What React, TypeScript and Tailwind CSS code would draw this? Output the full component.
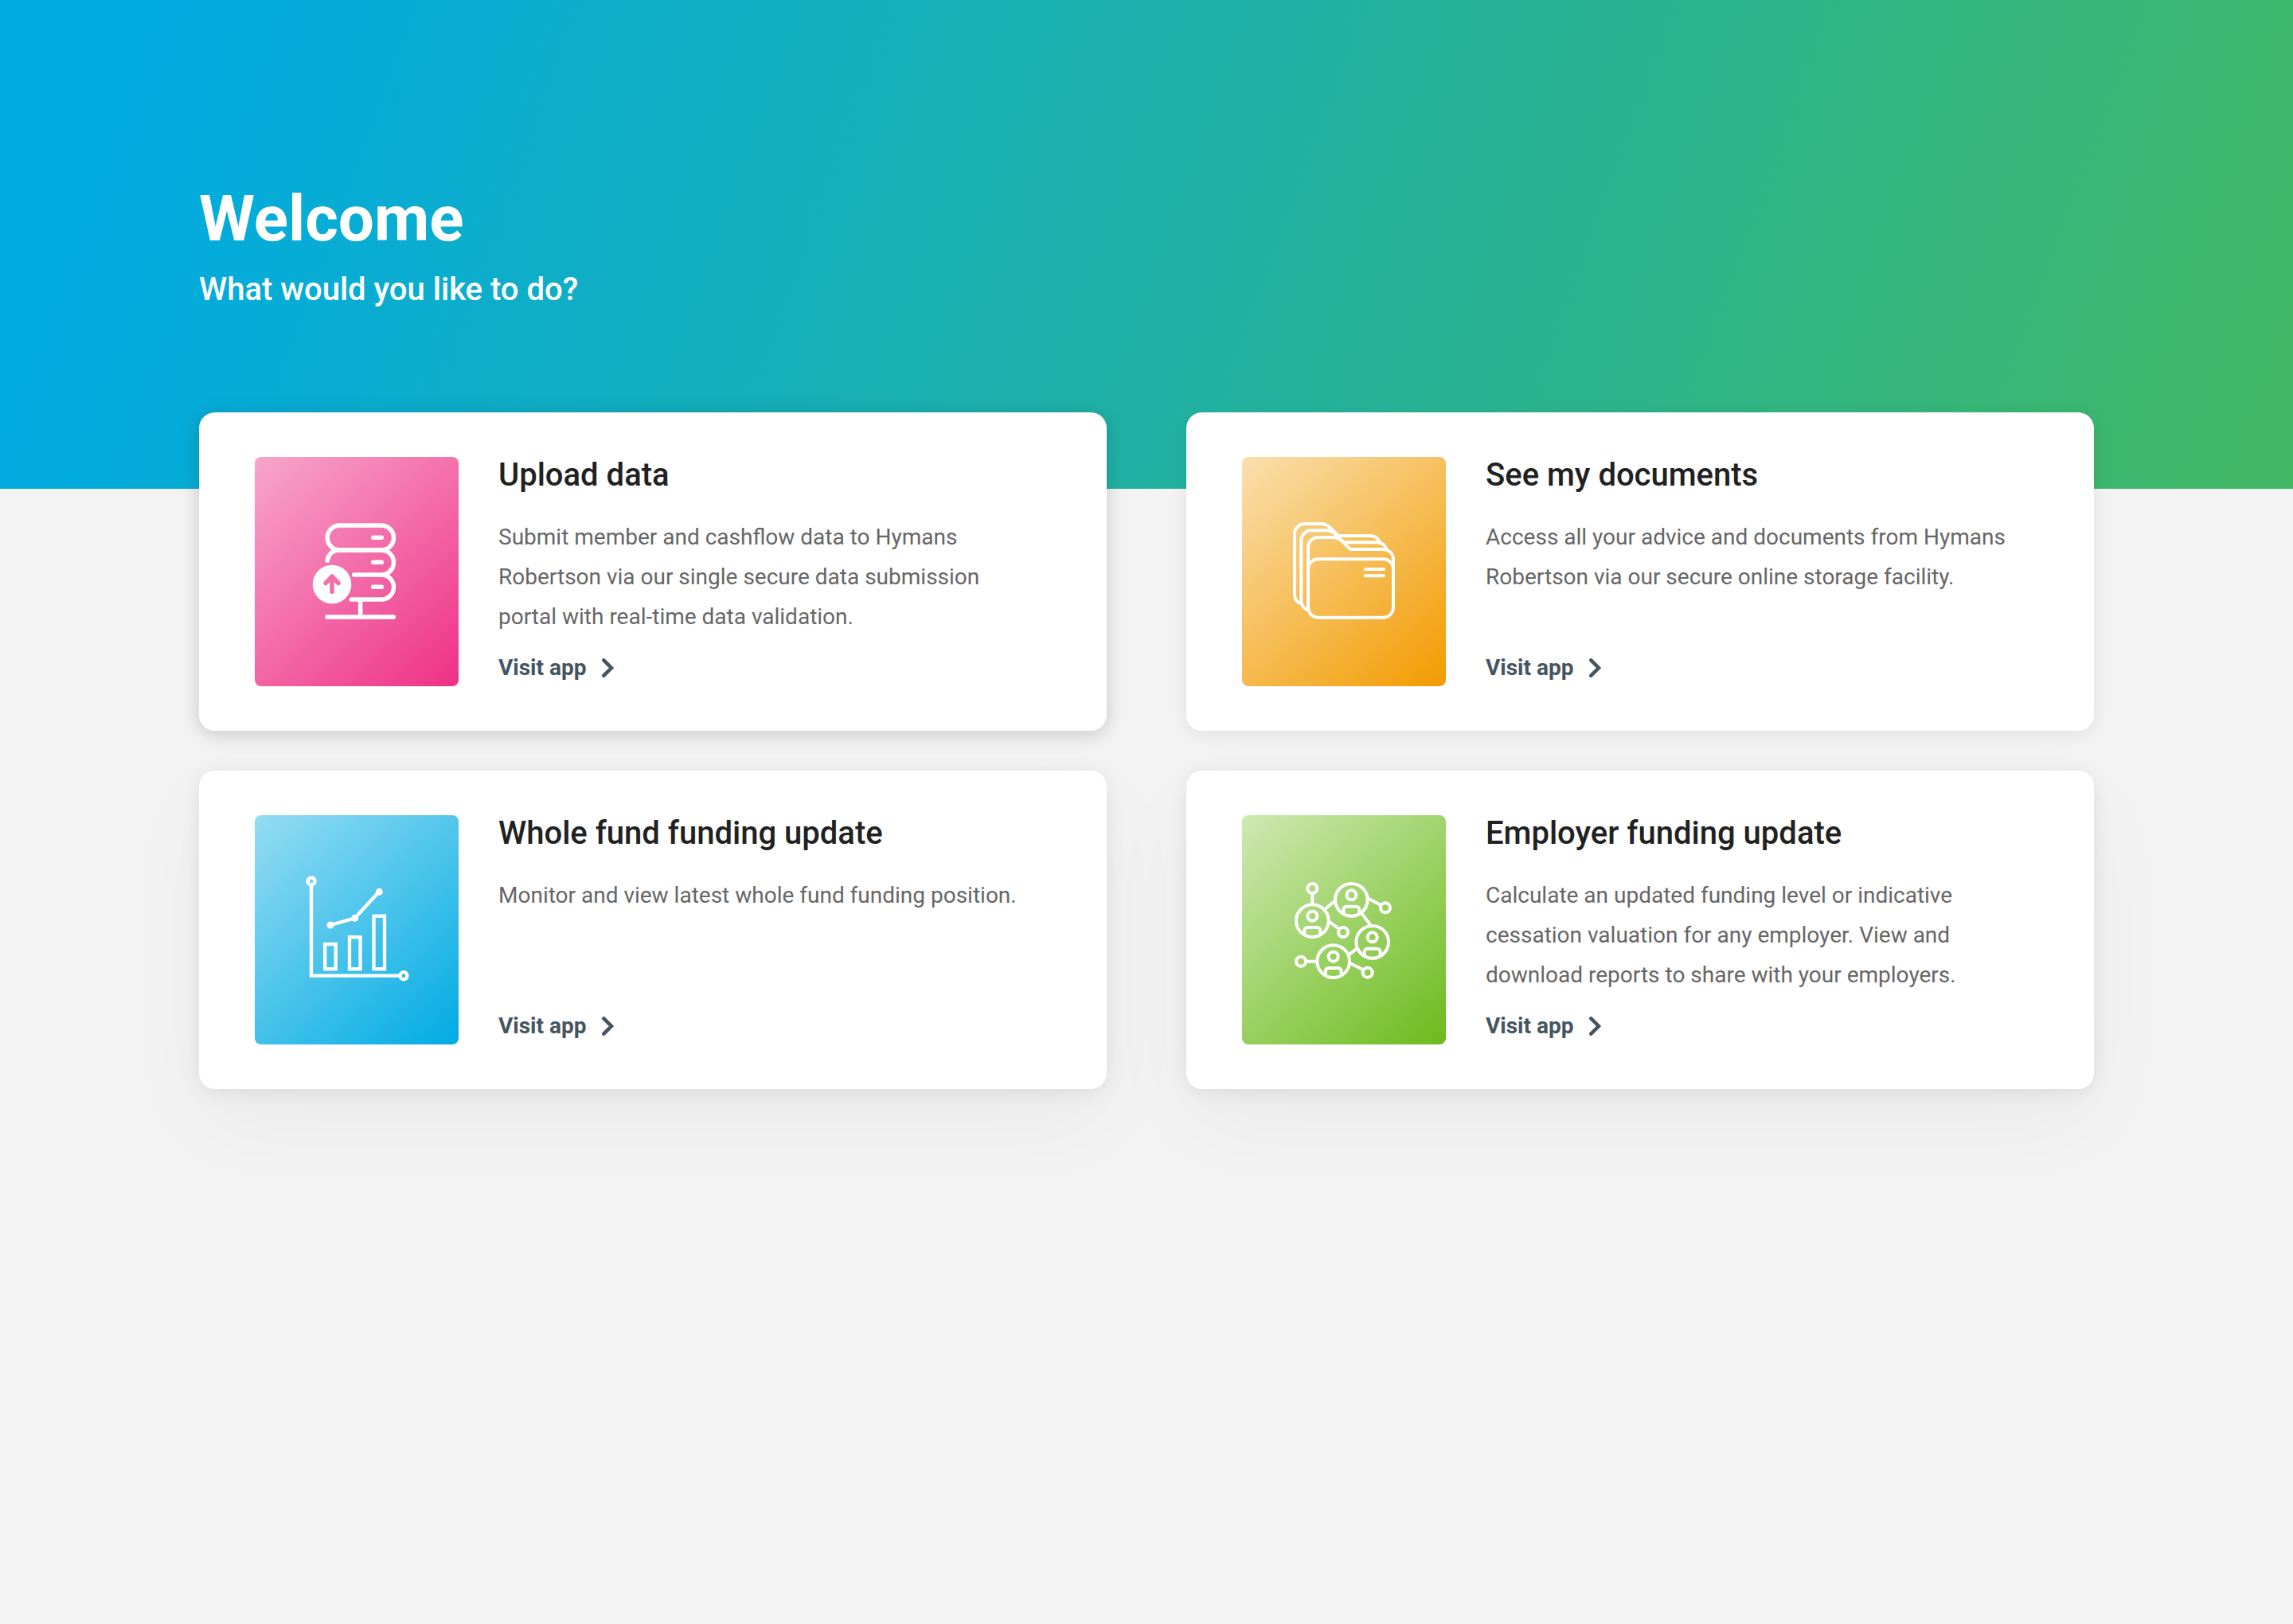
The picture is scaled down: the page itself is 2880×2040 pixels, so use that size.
import type { ReactNode } from "react";

type AppCard = {
  title: string;
  text: string;
  tile: string;
  shadow: string;
  icon: ReactNode;
};

const svgBase = {
  viewBox: "198 258 432 432",
  fill: "none",
  stroke: "white",
  strokeLinecap: "round" as const,
  "aria-hidden": true,
  className: "size-36",
};

function ServerIcon() {
  return (
    <svg {...svgBase} strokeWidth={16.5} strokeLinejoin="round">
      <mask id="arrow-cutout" maskUnits="userSpaceOnUse" x="198" y="258" width="432" height="432">
        <rect x="198" y="258" width="432" height="432" fill="white" stroke="none" />
        <path d="M321 550V492M297 517.500L321 492.500L345 517.500" stroke="black" />
      </mask>
      <rect x="303.500" y="300" width="250" height="93" rx="46.500" />
      <path d="M303.500 433C306 410 324 393 347 393H507A46.500 46.500 0 0 1 507 486H404" />
      <path d="M507 486A46.500 46.500 0 0 1 507 579H394M428 579V645M303 645H553" />
      <path d="M476 346H508M476 439H508M476 532H508" />
      <circle cx="321" cy="522" r="73" fill="white" stroke="none" mask="url(#arrow-cutout)" />
    </svg>
  );
}

function FoldersIcon() {
  return (
    <svg {...svgBase} strokeWidth={12}>
      <path d="M279 610V383A38 38 0 0 1 317 345H368C384 345 397 349 408 360L438 390H562A38 38 0 0 1 600 428V608A38 38 0 0 1 562 647H317A38 38 0 0 1 279 608" />
      <path d="M279 465A38 38 0 0 1 317 427H562A38 38 0 0 1 600 465" />
      <path d="M277 618C263 614 253 600 253 584V357A38 38 0 0 1 291 319H345C360 319 371 323 382 334L413 364H537C555 364 568 373 574 388" />
      <path d="M251 594C237 589 228 576 228 560V332A38 38 0 0 1 266 294H327C341 294 351 298 362 309L393 339H512C530 339 542 348 549 363" />
      <path d="M494 465H564M494 490H564" />
    </svg>
  );
}

function ChartIcon() {
  return (
    <svg {...svgBase} strokeWidth={13} strokeLinecap="butt">
      <circle cx="243" cy="291" r="13.500" />
      <circle cx="591" cy="647" r="13.500" />
      <path d="M243 304V647H578" />
      <rect x="294.500" y="528" width="40.500" height="93.500" />
      <rect x="387" y="501.500" width="40.500" height="120" />
      <rect x="478.500" y="422" width="40.500" height="199.500" />
      <path d="M315 456L407 430L498 331" />
      <g fill="white" stroke="none">
        <circle cx="315" cy="456" r="13.500" />
        <circle cx="407" cy="430" r="13.500" />
        <circle cx="499" cy="331" r="13.500" />
      </g>
    </svg>
  );
}

function Person({ x, y }: { x: number; y: number }) {
  return (
    <g transform={`translate(${x} ${y})`}>
      <circle r="61" />
      <circle cy="-18" r="18" />
      <path d="M-30 52V37A12 12 0 0 1 -18 25H18A12 12 0 0 1 30 37V52" />
    </g>
  );
}

function NetworkIcon() {
  return (
    <svg {...svgBase} strokeWidth={12} strokeLinecap="butt">
      <Person x={442} y={361} />
      <Person x={295} y={440} />
      <Person x={521} y={520} />
      <Person x={374} y={593} />
      <circle cx="295" cy="318" r="18" />
      <circle cx="570" cy="391" r="18" />
      <circle cx="411" cy="483" r="18" />
      <circle cx="252" cy="593" r="18" />
      <circle cx="503" cy="635" r="18" />
      <path d="M295 336V379M340 398L382 363M504 355L553 381M479 409L516 459M357 442L396 471M464 544L431 569M270 593H313M436 599L487 625" />
    </svg>
  );
}

const deepShadow = "shadow-[0_4px_24px_rgba(0,0,0,0.18)]";
const softShadow = "shadow-[0_4px_24px_rgba(0,0,0,0.08)]";
const wideShadow = "shadow-[0_4px_24px_rgba(0,0,0,0.08),0_40px_120px_rgba(0,0,0,0.04)]";

const cards: AppCard[] = [
  {
    title: "Upload data",
    text: "Submit member and cashflow data to Hymans Robertson via our single secure data submission portal with real-time data validation.",
    tile: "bg-[linear-gradient(138deg,#f8a5cb,#ee3186)]",
    shadow: deepShadow,
    icon: <ServerIcon />,
  },
  {
    title: "See my documents",
    text: "Access all your advice and documents from Hymans Robertson via our secure online storage facility.",
    tile: "bg-[linear-gradient(138deg,#fadfae,#f29b00)]",
    shadow: softShadow,
    icon: <FoldersIcon />,
  },
  {
    title: "Whole fund funding update",
    text: "Monitor and view latest whole fund funding position.",
    tile: "bg-[linear-gradient(138deg,#95dcf3,#00abe3)]",
    shadow: wideShadow,
    icon: <ChartIcon />,
  },
  {
    title: "Employer funding update",
    text: "Calculate an updated funding level or indicative cessation valuation for any employer. View and download reports to share with your employers.",
    tile: "bg-[linear-gradient(138deg,#cee9b2,#6cbb1c)]",
    shadow: wideShadow,
    icon: <NetworkIcon />,
  },
];

function Card({ title, text, tile, shadow, icon }: AppCard) {
  return (
    <article className={`flex gap-[50px] rounded-[20px] bg-white px-[70px] py-14 ${shadow}`}>
      <div className={`flex h-72 w-64 shrink-0 items-center justify-center rounded-lg ${tile}`}>{icon}</div>
      <div className="flex min-w-0 flex-1 flex-col">
        <h2 className="text-[40px] leading-[46px] font-medium text-[#212121]">{title}</h2>
        <p className="mt-[30px] max-w-[660px] text-[28px] leading-[50px] text-[#666666]">{text}</p>
        <a href="#" className="mt-auto flex items-center gap-5 self-start text-[28px] leading-[46px] font-bold text-[#455560]">
          Visit app
          <svg viewBox="0 0 16 24" className="h-6 w-4" fill="none" stroke="currentColor" strokeWidth="4.500" aria-hidden="true">
            <path d="M2.300 2.300L12 12L2.300 21.700" strokeLinecap="round" />
          </svg>
        </a>
      </div>
    </article>
  );
}

export default function App() {
  return (
    <div className="min-h-screen bg-[#f3f3f3] font-[Roboto,sans-serif]">
      <header className="bg-[linear-gradient(110deg,#00abe3_6%,#41b864_100%)] px-[250px] pt-[227px] pb-[225px] text-white">
        <h1 className="text-[80px] leading-[96px] font-bold">Welcome</h1>
        <p className="mt-4 text-[40px] leading-[50px] font-medium">What would you like to do?</p>
      </header>
      <main className="-mt-24 grid grid-cols-2 gap-x-[100px] gap-y-[50px] px-[250px] pb-24">
        {cards.map((card) => (
          <Card key={card.title} {...card} />
        ))}
      </main>
    </div>
  );
}
